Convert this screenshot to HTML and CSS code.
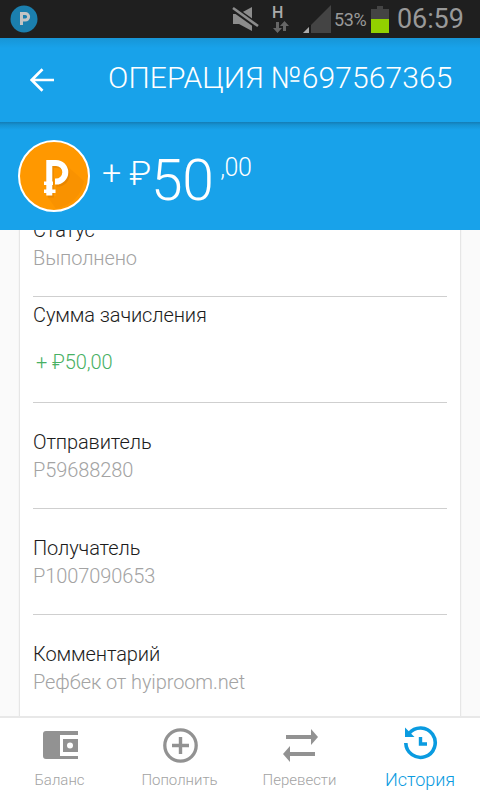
FILE: index.html
```html
<!DOCTYPE html>
<html lang="ru">
<head>
  <meta charset="UTF-8">
  <meta name="viewport" content="width=device-width, initial-scale=1.0">
  <title>Операция №697567365</title>

  <link rel="stylesheet" href="styles.css">
</head>

<body>

  <!-- Status bar -->
  <div class="status-bar">
    <svg class="app-badge" width="28" height="28" viewBox="0 0 28 28">
      <circle cx="14" cy="14" r="13.5" fill="#1b7fae"/>
      <path d="M11.500 20V8.500h3.800a3.300 3.300 0 0 1 0 6.600h-3" fill="none" stroke="#c4c4c4" stroke-width="3"/>
    </svg>
    <svg class="mute" width="27" height="26" viewBox="0 0 27 26">
      <path d="M1 8h6L20 1v24L7 18H1z" fill="#8c8c8c"/>
      <path d="M-1 1l28 20" stroke="#1f1f1f" stroke-width="6"/>
      <path d="M1 2l25 18" stroke="#8c8c8c" stroke-width="2.6"/>
    </svg>
    <div class="network">
      <span>H</span>
      <svg width="16" height="12" viewBox="0 0 16 12">
        <path d="M3 1h3v6h3l-4.500 5L0 7h3z" fill="#666"/>
        <path d="M10 10h3V5h3l-4.500-5L7 5h3z" fill="#666"/>
      </svg>
    </div>
    <svg class="signal" width="28" height="28" viewBox="0 0 28 28">
      <path d="M28 0v28H0z" fill="#444"/>
      <path d="M6 22v6H0z" fill="#aaa"/>
      <path d="M7 20v8" stroke="#111" stroke-width="1.500"/>
    </svg>
    <span class="percent">53%</span>
    <svg class="battery" width="18" height="27" viewBox="0 0 18 27">
      <path d="M6 0h6v3h6v10H0V3h6z" fill="#444"/>
      <path d="M0 13h18v14H0z" fill="#92d000"/>
    </svg>
    <span class="clock">06:59</span>
  </div>

  <!-- Title bar -->
  <div class="header">
    <svg class="back" width="24" height="24" viewBox="0 0 24 24">
      <path d="M24 12H2M12.500 1.200L1.700 12l10.800 10.800" fill="none" stroke="#fff" stroke-width="2.700"/>
    </svg>
    <h1>ОПЕРАЦИЯ №697567365</h1>
  </div>

  <!-- Amount -->
  <div class="amount">
    <svg class="coin" width="72" height="72" viewBox="0 0 72 72">
      <circle cx="36" cy="36" r="35" fill="#ff9800" stroke="#fff" stroke-width="2"/>
      <path d="M47 24l19 17q-4 22-28 28l-9-13h9V45h5z" fill="#f28c00" opacity=".45"/>
      <g fill="none" stroke="#c86f00" stroke-width="6" opacity=".35" transform="translate(1.500 2)">
        <path d="M31.300 55.500V23H38a9.300 9.300 0 0 1 0 18.600h-1"/>
      </g>
      <g fill="none" stroke="#fff">
        <path d="M31.300 55.500V23M28.300 23H38a9.300 9.300 0 0 1 0 18.600h-1" stroke-width="6"/>
        <path d="M26 43.200h9M26 51.300h11.500" stroke-width="3.600"/>
      </g>
    </svg>
    <span class="sign">+</span>
    <span class="currency">₽</span>
    <span class="whole">50</span>
    <span class="cents">,00</span>
  </div>

  <!-- Operation details -->
  <div class="content">
    <div class="card">
      <div class="row">
        <p class="label">Статус</p>
        <p class="value">Выполнено</p>
      </div>
      <div class="row row-sum">
        <p class="label">Сумма зачисления</p>
        <p class="value income">+ ₽50,00</p>
      </div>
      <div class="row">
        <p class="label">Отправитель</p>
        <p class="value">P59688280</p>
      </div>
      <div class="row">
        <p class="label">Получатель</p>
        <p class="value">P1007090653</p>
      </div>
      <div class="row">
        <p class="label">Комментарий</p>
        <p class="value">Рефбек от hyiproom.net</p>
      </div>
    </div>
  </div>

  <!-- Bottom tabs -->
  <div class="tabs">
    <div class="tab">
      <svg width="36" height="36" viewBox="0 0 36 36">
        <path d="M4 4h32v4H18v21h18v3H4a3 3 0 0 1-3-3V7a3 3 0 0 1 3-3z" fill="#929292"/>
        <path d="M21 12h15v13H21z" fill="#929292"/>
        <circle cx="28" cy="18.500" r="3" fill="#fff"/>
      </svg>
      <span>Баланс</span>
    </div>
    <div class="tab">
      <svg width="36" height="36" viewBox="0 0 36 36">
        <circle cx="18.500" cy="18.500" r="15.700" fill="none" stroke="#929292" stroke-width="3.300"/>
        <path d="M18.500 10v17M10 18.500h17" stroke="#929292" stroke-width="3.400"/>
      </svg>
      <span>Пополнить</span>
    </div>
    <div class="tab">
      <svg width="36" height="36" viewBox="0 0 36 36">
        <path d="M4 8h25V2l7 8-7 8v-6H4zM33 25H8v-6l-7 8 7 8v-6h25z" fill="#929292"/>
      </svg>
      <span>Перевести</span>
    </div>
    <div class="tab active">
      <svg width="36" height="36" viewBox="0 0 36 36">
        <path d="M7 8.500A14.700 14.700 0 1 1 3.800 18" fill="none" stroke="#0a9be0" stroke-width="3.600"/>
        <path d="M3 2.500l9.500 9.500H3z" fill="#0a9be0"/>
        <path d="M18.500 12v7H25" fill="none" stroke="#0a9be0" stroke-width="3.400"/>
      </svg>
      <span>История</span>
    </div>
  </div>

</body>
</html>
```

FILE: styles.css
```css
* {
  box-sizing: border-box;
}

body {
  margin: 0;
  height: 800px;
  display: flex;
  flex-direction: column;
  overflow: hidden;
  background: #fafafa;
  font-family: Roboto, sans-serif;
  font-weight: 300;
}

/* Status bar */
.status-bar {
  display: flex;
  align-items: center;
  flex: none;
  height: 38px;
  padding-left: 10px;
  background: #1f1f1f;
  color: #999;
}

.mute {
  margin-left: 194px;
}

.network {
  display: flex;
  flex-direction: column;
  width: 16px;
  margin-left: 14px;
  font-size: 16px;
  font-weight: 500;
  line-height: 14px;
  color: #aaa;
}

.network span {
  margin-left: -1px;
}

.network svg {
  margin-top: 1px;
}

.signal {
  margin-left: 14px;
}

.percent {
  width: 33px;
  margin-left: 3px;
  font-size: 18px;
  font-weight: 400;
  letter-spacing: -0.4px;
}

.battery {
  margin-left: 4px;
}

.clock {
  margin-left: 8px;
  font-size: 27px;
  font-weight: 400;
  letter-spacing: -0.1px;
}

/* Title bar */
.header {
  display: flex;
  align-items: center;
  flex: none;
  height: 84px;
  padding-left: 30px;
  background: linear-gradient(#1795d6, #18a2ea 10px);
  color: #fff;
}

.header h1 {
  margin: 0 0 6px 54px;
  font-size: 30px;
  font-weight: 300;
  letter-spacing: 0.1px;
  white-space: nowrap;
}

/* Amount */
.amount {
  display: flex;
  align-items: flex-start;
  flex: none;
  z-index: 1;
  height: 108px;
  padding: 18px 0 0 18px;
  background: linear-gradient(#147db5, #1693d4 3px, #18a2ea 8px);
  color: #fff;
  line-height: 1;
}

.sign {
  margin: 15px 0 0 12px;
  font-size: 34px;
}

.currency {
  margin: 16px 0 0 8px;
  font-size: 34px;
}

.whole {
  margin-top: 12px;
  font-size: 57px;
  letter-spacing: -0.5px;
}

.cents {
  margin: 15px 0 0 7px;
  font-size: 25px;
  letter-spacing: -0.5px;
}

/* Details */
.content {
  flex: 1;
  min-height: 0;
  overflow: hidden;
  padding: 0 20px;
}

.card {
  height: 600px;
  margin-top: -39px;
  padding: 0 13px;
  background: #fff;
  box-shadow: 0 0 2px rgba(0, 0, 0, 0.25);
}

.row {
  height: 106px;
  padding-top: 25px;
  border-bottom: 1px solid #cfcfcf;
}

.row p {
  margin: 0;
  font-size: 20px;
  line-height: 28px;
  letter-spacing: -0.1px;
}

.label {
  color: #1c1c1c;
}

.value {
  color: #a3a3a3;
}

.row-sum {
  padding-top: 4px;
}

.row-sum .income {
  margin: 19px 0 0 3px;
  color: #47b063;
}

/* Bottom tabs */
.tabs {
  display: flex;
  flex: none;
  z-index: 1;
  height: 84px;
  border-top: 2px solid #e8e8e8;
  background: #fff;
}

.tab {
  display: flex;
  flex-direction: column;
  align-items: center;
  width: 120px;
  padding-top: 9px;
  font-size: 15px;
  line-height: 18px;
  color: #a3a3a3;
}

.tab span {
  margin: 8px 1px 0 0;
}

.active {
  padding-top: 7px;
  font-size: 18px;
  color: #0a9be0;
}

.active span {
  margin: 10px 0 0;
}
```
